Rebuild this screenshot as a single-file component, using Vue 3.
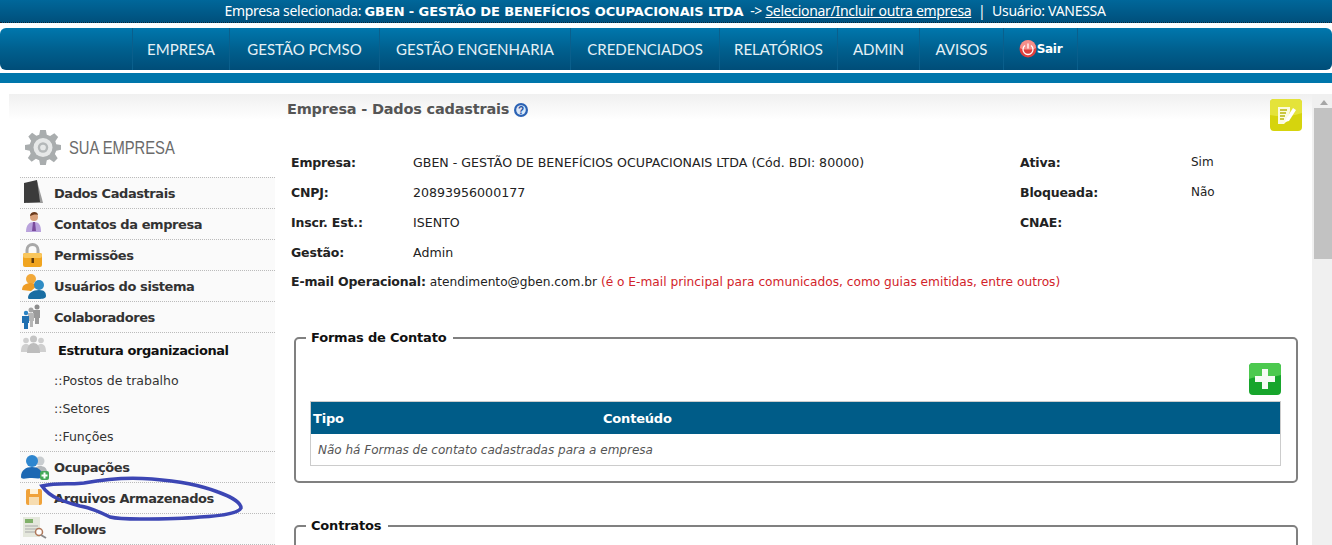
<script setup>
const navItems = [
  { label: 'EMPRESA', width: 97 },
  { label: 'GESTÃO PCMSO', width: 150 },
  { label: 'GESTÃO ENGENHARIA', width: 191 },
  { label: 'CREDENCIADOS', width: 149 },
  { label: 'RELATÓRIOS', width: 118 },
  { label: 'ADMIN', width: 82 },
  { label: 'AVISOS', width: 84 }
]

const infoRows = [
  { label: 'Empresa:', value: 'GBEN - GESTÃO DE BENEFÍCIOS OCUPACIONAIS LTDA (Cód. BDI: 80000)', sideLabel: 'Ativa:', sideValue: 'Sim' },
  { label: 'CNPJ:', value: '20893956000177', sideLabel: 'Bloqueada:', sideValue: 'Não' },
  { label: 'Inscr. Est.:', value: 'ISENTO', sideLabel: 'CNAE:', sideValue: '' },
  { label: 'Gestão:', value: 'Admin', sideLabel: '', sideValue: '' }
]
</script>

<template>
  <div class="page">
    <div class="topbar">
      Empresa selecionada: <b>GBEN - GESTÃO DE BENEFÍCIOS OCUPACIONAIS LTDA</b>&nbsp; -&gt; <a>Selecionar/Incluir outra empresa</a>&nbsp; |&nbsp; Usuário: VANESSA
    </div>

    <nav class="nav">
      <a v-for="item in navItems" :key="item.label" class="nav-item" :style="{ width: item.width + 'px' }">{{ item.label }}</a>
      <a class="nav-item nav-exit">
        <svg width="18" height="18" viewBox="0 0 18 18">
          <circle cx="9" cy="9" r="8.500" fill="#df3f3e" />
          <path d="M1 8a8 8 0 0 1 16 0c-2 2-14 2-16 0z" fill="#f58f8a" />
          <path d="M6 5.500a5 5 0 1 0 6 0M9 3.500v5" fill="none" stroke="#fff" stroke-width="1.300" />
        </svg>
        <b>Sair</b>
      </a>
    </nav>
    <div class="band"></div>

    <div class="content">
      <div class="panel">
        <aside class="sidebar">
          <div class="side-title">
            <svg width="36" height="36" viewBox="0 0 38 38">
              <path fill="#a9adae" d="M16 1h6l1 5 3.500 1.500 4.500-3 4 4-3 4.500L33 16l5 1v5l-5 1-1.500 3.500 3 4.500-4 4-4.500-3L23 33l-1 5h-6l-1-5-3.500-1.500-4.500 3-4-4 3-4.500L5 23l-5-1v-5l5-1 1.500-3.500-3-4.500 4-4 4.500 3L15 6z" />
              <circle cx="19" cy="19.500" r="10" fill="#e6e8e8" />
              <circle cx="19" cy="19.500" r="5.500" fill="#b4b8b9" />
              <circle cx="19" cy="19.500" r="3" fill="#e6e8e8" />
            </svg>
            <span>SUA EMPRESA</span>
          </div>

          <a class="side-item">
            <svg width="22" height="24" viewBox="0 0 22 24"><path fill="#9a9a9a" d="M16 1l5 18 1 4H6z" /><path fill="#3b3b3b" d="M3 3l13-3 3 22-16 1z" /></svg>
            Dados Cadastrais
          </a>
          <a class="side-item">
            <svg width="22" height="24" viewBox="0 0 22 24"><circle cx="13" cy="6" r="4" fill="#d9a27c" /><path fill="#6a3a1d" d="M9 5c0-5 8-5 8-1-3-1-5 0-8 1z" /><path fill="#b9a2dc" d="M5 21c0-7 3-10 8-10s7 3 7 10z" /><path fill="#7a4b9c" d="M12 11h2l1 9h-4z" /></svg>
            Contatos da empresa
          </a>
          <a class="side-item">
            <svg width="22" height="26" viewBox="0 0 22 26"><path fill="none" stroke="#a8a8a8" stroke-width="3" d="M6 12V8a5.500 5.500 0 0 1 11 0v4" /><rect x="2" y="11" width="19" height="14" rx="2" fill="#f0a41f" /><rect x="2" y="11" width="19" height="5" rx="2" fill="#f9c65c" /><rect x="10.500" y="16" width="2.500" height="5" fill="#5d3a0c" /></svg>
            Permissões
          </a>
          <a class="side-item">
            <svg width="26" height="26" viewBox="0 0 26 26"><circle cx="10" cy="6" r="5" fill="#f2a93a" /><path fill="#ee9c25" d="M1 17c0-5 4-7 9-7 3 0 5 1 6 3l-6 5z" /><circle cx="18" cy="12" r="5" fill="#2f8cc4" /><path fill="#1a6ea3" d="M7 25c0-5 5-8 11-8s7 3 7 6-5 3-9 3-9 1-9-1z" /></svg>
            Usuários do sistema
          </a>
          <a class="side-item">
            <svg width="22" height="26" viewBox="0 0 22 26"><circle cx="16" cy="3" r="2.500" fill="#8c8c8c" /><path fill="#9a9a9a" d="M12 6h7v8h-1v6h-4v-6h-2z" /><circle cx="10" cy="6" r="2.500" fill="#a5a5a5" /><path fill="#b5b5b5" d="M7 9h6v8h-1v6H9v-6H7z" /><circle cx="5" cy="9" r="2.200" fill="#2a83c4" /><path fill="#1f6fb0" d="M1 12h7v7H7v6H3v-6H1z" /></svg>
            Colaboradores
          </a>

          <div class="side-group">
            <a class="side-item group-head">
              <svg width="25" height="18" viewBox="0 0 25 18"><circle cx="12.500" cy="4" r="3.500" fill="#c4c4c4" /><circle cx="5" cy="5.500" r="2.800" fill="#cfcfcf" /><circle cx="20" cy="5.500" r="2.800" fill="#cfcfcf" /><path fill="#cfcfcf" d="M0 17c0-6 2-8 5-8s5 2 5 8zM15 17c0-6 2-8 5-8s5 2 5 8z" /><path fill="#bdbdbd" d="M6 18c0-7 3-10 6.500-10S19 11 19 18z" /></svg>
              Estrutura organizacional
            </a>
            <a class="side-sub">::Postos de trabalho</a>
            <a class="side-sub">::Setores</a>
            <a class="side-sub">::Funções</a>
          </div>

          <a class="side-item">
            <svg width="28" height="26" viewBox="0 0 28 26"><circle cx="19" cy="7" r="4.500" fill="#c9cdd0" /><path fill="#b4b8bb" d="M13 19c0-5 2-7 6-7s7 2 7 6z" /><circle cx="11" cy="7" r="6" fill="#2e86cf" /><path fill="#1c68b3" d="M0 23c0-7 5-10 11-10s10 3 10 8-5 3-10 3-11 2-11-1z" /><rect x="19" y="17" width="9" height="9" rx="2" fill="#45a85a" /><path stroke="#fff" stroke-width="2" d="M23.500 18.500v6M20.500 21.500h6" /></svg>
            Ocupações
          </a>
          <a class="side-item save-item">
            <svg width="16" height="16" viewBox="0 0 16 16"><rect width="16" height="16" rx="2" fill="#f0a23a" /><rect x="4" y="0" width="8" height="5" fill="#fff2d8" /><rect x="3" y="8" width="10" height="8" fill="#f6dcb0" /></svg>
            Arquivos Armazenados
          </a>
          <a class="side-item">
            <svg width="28" height="24" viewBox="0 0 28 24"><rect x="2" y="1" width="17" height="20" fill="#e4e7dc" /><rect x="4" y="3" width="8" height="4" fill="#7fb069" /><path stroke="#a9a9a9" d="M4 10h13M4 13h13M4 16h10" /><circle cx="18" cy="16" r="3.500" fill="#fff" stroke="#b0785a" stroke-width="1.500" /><path stroke="#8a8a8a" stroke-width="2" d="M20 19l5 3" /></svg>
            Follows
          </a>
        </aside>

        <main class="main">
          <div class="main-head">
            <h1>Empresa - Dados cadastrais
              <svg width="14" height="14" viewBox="0 0 14 14"><circle cx="7" cy="7" r="7" fill="#2b62b4" /><circle cx="7" cy="7" r="4.800" fill="#dbe8f8" /><text x="7" y="10.500" text-anchor="middle" font-size="10" font-weight="700" font-family="Liberation Sans, sans-serif" fill="#1f4f9e">?</text></svg>
            </h1>
            <svg class="note" width="32" height="32" viewBox="0 0 32 32">
              <rect width="32" height="32" rx="4" fill="#d6d40d" />
              <path d="M0 4a4 4 0 0 1 4-4h24a4 4 0 0 1 4 4v10C20 18 10 18 0 16z" fill="#e4e33a" />
              <path d="M8 8h12v4l-3 10-3 3H8z" fill="#fbfbe0" />
              <path d="M10 11h7M10 14h6M10 17h5M10 20h4" stroke="#b9b70a" stroke-width="1.300" />
              <path d="M16 20l7-11 3 2-7 11-4 1z" fill="#fff" />
            </svg>
          </div>

          <div class="info">
            <div v-for="row in infoRows" :key="row.label" class="info-row">
              <b class="info-label">{{ row.label }}</b>
              <span class="info-value">{{ row.value }}</span>
              <b class="info-side-label">{{ row.sideLabel }}</b>
              <span>{{ row.sideValue }}</span>
            </div>
            <div class="info-mail">
              <b>E-mail Operacional:</b> atendimento@gben.com.br
              <span class="red">(é o E-mail principal para comunicados, como guias emitidas, entre outros)</span>
            </div>
          </div>

          <fieldset class="box">
            <legend>Formas de Contato</legend>
            <div class="box-tools">
              <svg width="32" height="32" viewBox="0 0 32 32">
                <rect width="32" height="32" rx="4" fill="#17a52c" />
                <path d="M0 4a4 4 0 0 1 4-4h24a4 4 0 0 1 4 4v8C20 16 10 12 0 16z" fill="#4cc94f" />
                <path d="M13 6h6v7h7v6h-7v7h-6v-7H6v-6h7z" fill="#f4fbf4" />
              </svg>
            </div>
            <table class="grid">
              <thead>
                <tr><th class="col-type">Tipo</th><th>Conteúdo</th></tr>
              </thead>
              <tbody>
                <tr><td colspan="2">Não há Formas de contato cadastradas para a empresa</td></tr>
              </tbody>
            </table>
          </fieldset>

          <fieldset class="box box-next">
            <legend>Contratos</legend>
          </fieldset>
        </main>
      </div>

      <div class="scrollbar">
        <span class="scroll-arrow"></span>
        <span class="scroll-thumb"></span>
      </div>
    </div>

    <!-- marcação à mão por cima do menu -->
    <svg class="scribble" width="260" height="60" viewBox="0 0 260 60">
      <path d="M42 16C60 12 72 15 84 13 105 9 130 7 152 9c26 2 48 6 66 13 14 5 23 11 23 16-3 6-21 8-41 9-20 2-40 2-60 2-15 0-22 0-30-2-10-5-18-9-30-11C65 32 50 28 42 16z" fill="none" stroke="#3c46b4" stroke-width="3.500" />
    </svg>
  </div>
</template>

<style>
html, body { margin: 0; overflow: hidden; background: #fff; }
</style>

<style scoped>
.page {
  position: relative;
  height: 545px;
  overflow: hidden;
  font-family: "DejaVu Sans", sans-serif;
  font-size: 12px;
  color: #222;
}
.topbar {
  height: 22px;
  line-height: 22px;
  text-align: center;
  color: #fff;
  font-size: 14px;
  font-family: "Noto Sans", sans-serif;
  letter-spacing: -0.3px;
  background: linear-gradient(#00679a, #00507c);
  border-bottom: 1px dotted #123;
  padding-right: 2px;
}
.topbar b { font-family: "DejaVu Sans", sans-serif; font-size: 13px; letter-spacing: -0.1px; }
.topbar a { text-decoration: underline; }
.nav {
  display: flex;
  height: 42px;
  margin-top: 5px;
  padding-left: 132px;
  border-radius: 6px;
  background: linear-gradient(#0077ad, #00608f 50%, #004d78);
}
.nav-item {
  display: flex;
  align-items: center;
  justify-content: center;
  box-sizing: border-box;
  color: #e6f1f6;
  font-family: Lato, sans-serif;
  font-size: 15px;
  border-left: 1px solid #0a5f8c;
}
.nav-exit {
  width: 75px;
  border-right: 1px solid #0a5f8c;
}
.nav-exit b { font-size: 12px; color: #fff; letter-spacing: -0.3px; font-family: "DejaVu Sans", sans-serif; }
.band {
  height: 10px;
  margin-top: 3px;
  background: #0076ab;
}
.content {
  display: flex;
  margin: 11px 0 0 9px;
}
.panel {
  display: flex;
  width: 1303px;
  box-sizing: border-box;
  padding-left: 11px;
  background: linear-gradient(#f0f0f0, #fff 26px);
}
.sidebar {
  flex: none;
  width: 255px;
  padding-top: 31px;
}
.side-title {
  display: flex;
  align-items: center;
  gap: 8px;
  height: 52px;
  padding-left: 5px;
  margin-top: -4px;
  margin-bottom: 4px;
  color: #6b6b6b;
  font-family: "Liberation Sans", sans-serif;
  font-size: 18px;
}
.side-title span { transform: scaleX(0.82); transform-origin: left; padding-top: 2px; }
.side-item {
  display: flex;
  align-items: center;
  height: 30px;
  background: #fafafa;
  border-top: 1px dotted #bbb;
  font-weight: 700;
  font-size: 13px;
  letter-spacing: -0.42px;
  color: #333;
  position: relative;
  padding-left: 34px;
}
.side-item svg {
  position: absolute;
  left: 1px;
  top: 2px;
}
.save-item svg { left: 6px; top: 6px; }
.side-group { background: #fafafa; }
.group-head { height: 34px; padding-left: 38px; color: #111; }
.side-sub {
  display: flex;
  align-items: center;
  box-sizing: border-box;
  height: 28px;
  padding: 0 0 2px 34px;
  font-size: 12.500px;
  color: #333;
}
.side-item:last-child { border-bottom: 1px dotted #bbb; }
.main {
  flex: 1;
  padding-left: 12px;
  min-width: 0;
}
.main-head {
  display: flex;
  justify-content: space-between;
  height: 46px;
  padding: 5px 10px 2px 0;
}
.main-head h1 {
  margin: 2px 0 0;
  font-size: 14.500px;
  font-weight: 700;
  letter-spacing: -0.2px;
  color: #555;
}
.main-head h1 svg { vertical-align: -3px; }
.info { padding-left: 4px; }
.info-row, .info-mail {
  display: flex;
  align-items: center;
  height: 30px;
}
.info-mail { display: block; line-height: 30px; font-size: 12.200px; }
.info-row b, .info-mail b {
  font-size: 12.500px;
  letter-spacing: -0.15px;
}
.info-label { width: 122px; flex: none; }
.info-value { width: 607px; flex: none; font-size: 12.600px; }
.info-side-label { width: 171px; flex: none; }
.red { color: #d2232a; }
.box {
  margin: 33px 0 0 7px;
  width: 1004px;
  box-sizing: border-box;
  padding: 18px 15px 15px 14px;
  border: 2px solid #808080;
  border-radius: 5px;
}
.box legend {
  padding: 0 7px 0 5px;
  margin-left: -4px;
  font-weight: 700;
  font-size: 13px;
  letter-spacing: -0.2px;
  color: #111;
}
.box-tools {
  display: flex;
  justify-content: flex-end;
  height: 32px;
  margin-bottom: 6px;
}
.grid {
  width: 100%;
  border-collapse: collapse;
  border: 1px solid #ccc;
}
.grid th {
  height: 32px;
  padding: 0 2px;
  background: #005c88;
  color: #fff;
  text-align: left;
  font-size: 13px;
  letter-spacing: -0.2px;
}
.col-type { width: 286px; }
.grid td {
  height: 31px;
  padding: 0 7px;
  font-style: italic;
  color: #555;
}
.box-next { margin-top: 35px; height: 60px; }
.scrollbar {
  display: flex;
  flex-direction: column;
  align-items: flex-end;
  width: 20px;
  height: 451px;
  background: #f0f0f0;
}
.scroll-arrow {
  width: 0;
  margin: 6px 4px 3px;
  border: 4px solid transparent;
  border-top: 0;
  border-bottom: 5px solid #a6a6a6;
}
.scroll-thumb {
  width: 18px;
  height: 151px;
  background: #c2c2c2;
}
.scribble {
  position: absolute;
  left: 0;
  top: 470px;
}
</style>
